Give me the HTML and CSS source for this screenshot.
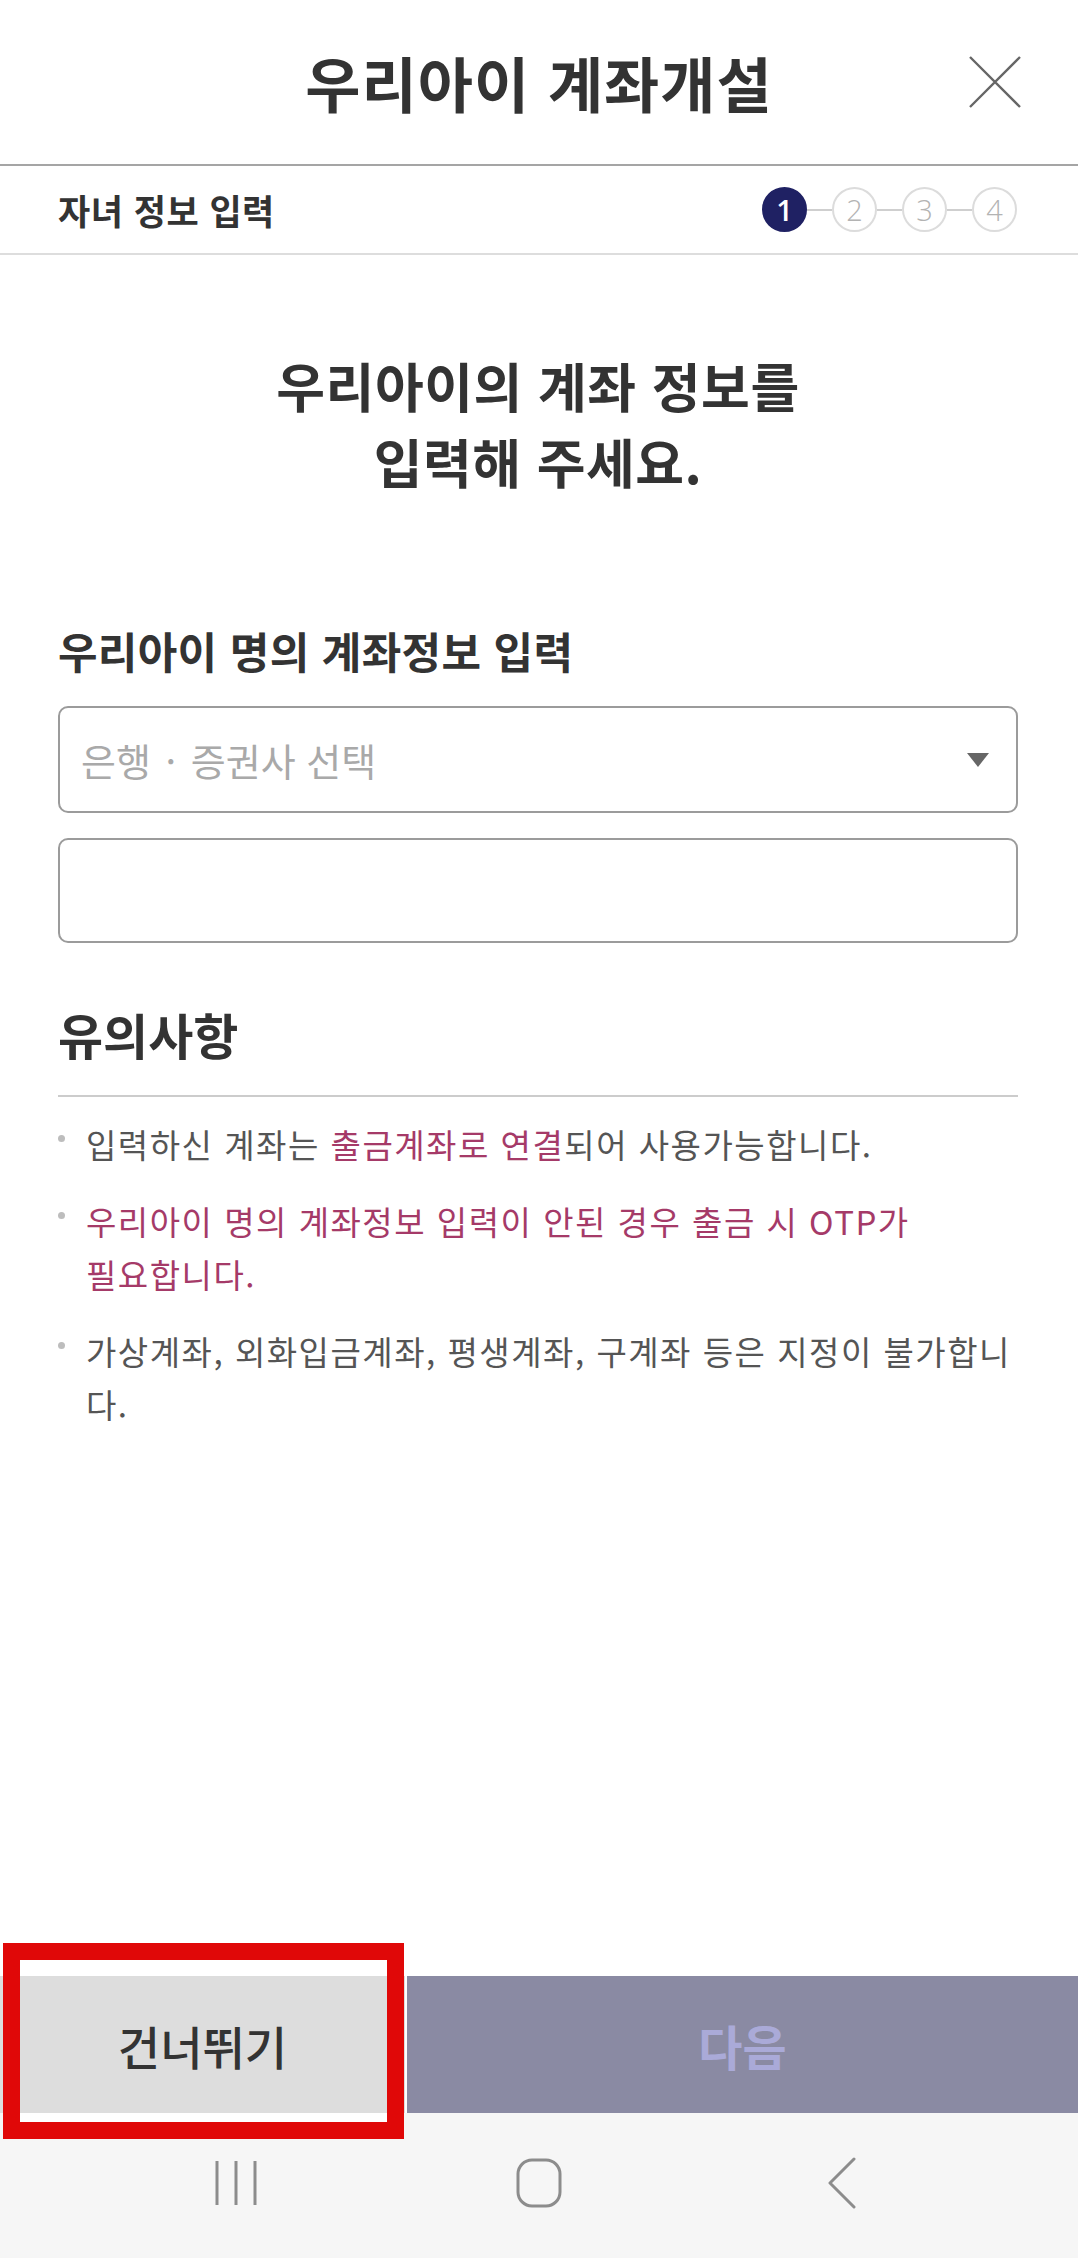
FILE: index.html
```html
<!DOCTYPE html>
<html lang="ko">
<head>
<meta charset="utf-8">
<title>우리아이 계좌개설</title>
<link rel="stylesheet" href="styles.css">
</head>
<body>
<div class="app">
  <header class="topbar">
    <div class="spacer"></div>
    <h1 class="title">우리아이 계좌개설</h1>
    <button class="close" aria-label="닫기">
      <svg width="52" height="52" viewBox="0 0 52 52"><path d="M1 1 L51 51 M51 1 L1 51" stroke="#666" stroke-width="2.4" fill="none"/></svg>
    </button>
  </header>

  <div class="steprow">
    <div class="steplabel">자녀 정보 입력</div>
    <div class="steps">
      <span class="step active">1</span><span class="link"></span>
      <span class="step">2</span><span class="link"></span>
      <span class="step">3</span><span class="link"></span>
      <span class="step">4</span>
    </div>
  </div>

  <main class="content">
    <h2 class="headline">우리아이의 계좌 정보를<br>입력해 주세요.</h2>

    <div class="fieldlabel">우리아이 명의 계좌정보 입력</div>
    <div class="select">
      <span class="placeholder">은행 <span class="mid">·</span> 증권사 선택</span>
      <span class="caret"></span>
    </div>
    <div class="input"></div>

    <h3 class="notice-title">유의사항</h3>
    <ul class="notice">
      <li><span class="dot"></span><p>입력하신 계좌는 <em>출금계좌로 연결</em>되어 사용가능합니다.</p></li>
      <li class="pink"><span class="dot"></span><p>우리아이 명의 계좌정보 입력이 안된 경우 출금 시 OTP가 <span class="nowrap">필요합니다.</span></p></li>
      <li><span class="dot"></span><p>가상계좌, 외화입금계좌, 평생계좌, 구계좌 등은 지정이 불가합니다.</p></li>
    </ul>
  </main>

  <div class="buttons">
    <button class="btn skip">건너뛰기</button>
    <button class="btn next">다음</button>
    <div class="highlight"></div>
  </div>

  <nav class="navbar">
    <div class="navitem">
      <svg width="44" height="48" viewBox="0 0 44 48"><path d="M3 2 V46 M22 2 V46 M41 2 V46" stroke="#8c8c8c" stroke-width="3" fill="none"/></svg>
    </div>
    <div class="navitem">
      <svg width="48" height="50" viewBox="0 0 48 50"><rect x="3" y="2" width="42" height="46" rx="14" ry="14" stroke="#8c8c8c" stroke-width="3" fill="none"/></svg>
    </div>
    <div class="navitem">
      <svg width="32" height="52" viewBox="0 0 32 52"><path d="M28 2 L4 26 L28 50" stroke="#8c8c8c" stroke-width="3" fill="none" stroke-linecap="round" stroke-linejoin="round"/></svg>
    </div>
  </nav>
</div>
</body>
</html>
```

FILE: styles.css
```css
* { box-sizing: border-box; }

html, body {
  margin: 0;
  padding: 0;
  background: #ffffff;
}

body {
  font-family: "Noto Sans CJK KR", "Noto Sans", sans-serif;
  color: #333333;
}

.app {
  width: 1078px;
  height: 2258px;
  display: flex;
  flex-direction: column;
  position: relative;
}

/* Header */
.topbar {
  height: 166px;
  border-bottom: 2px solid #a5a5a5;
  display: grid;
  grid-template-columns: 1fr auto 1fr;
  align-items: center;
}

.title {
  margin: 0;
  font-size: 60px;
  font-weight: 700;
  line-height: 1;
  color: #333333;
  letter-spacing: 1px;
}

.close {
  justify-self: end;
  margin-right: 57px;
  background: none;
  border: 0;
  padding: 0;
  width: 52px;
  height: 52px;
  display: flex;
}

/* Step row */
.steprow {
  height: 89px;
  border-bottom: 2px solid #dddddd;
  display: flex;
  align-items: center;
  justify-content: space-between;
  padding: 0 61px 0 58px;
}

.steplabel {
  font-size: 35px;
  font-weight: 700;
  color: #333333;
  line-height: 1;
  letter-spacing: 0.5px;
}

.steps {
  display: flex;
  align-items: center;
}

.step {
  width: 45px;
  height: 45px;
  border-radius: 50%;
  border: 2px solid #dcdcdc;
  display: flex;
  align-items: center;
  justify-content: center;
  font-family: "Open Sans", "Noto Sans", sans-serif;
  font-size: 29px;
  font-weight: 300;
  color: #b3b3b3;
  line-height: 1;
}

.step.active {
  background: #1f2163;
  border-color: #1f2163;
  color: #ffffff;
  font-weight: 600;
}

.link {
  width: 25px;
  height: 2px;
  background: #cfcfcf;
}

/* Content */
.content {
  padding: 0 60px 0 58px;
}

.headline {
  margin: 92px 0 0;
  text-align: center;
  font-size: 53px;
  font-weight: 700;
  line-height: 76px;
  color: #333333;
  letter-spacing: 0.5px;
}

.fieldlabel {
  margin-top: 125px;
  font-size: 43px;
  font-weight: 700;
  line-height: 52px;
  color: #333333;
  letter-spacing: 0.3px;
}

.select {
  margin-top: 30px;
  height: 107px;
  border: 2px solid #9b9b9b;
  border-radius: 10px;
  display: flex;
  align-items: center;
  justify-content: space-between;
  padding: 0 27px 0 21px;
}

.placeholder {
  font-size: 38px;
  color: #a9a9a9;
  line-height: 1;
}

.placeholder .mid {
  margin: 0 4px;
}

.caret {
  width: 0;
  height: 0;
  border-left: 11px solid transparent;
  border-right: 11px solid transparent;
  border-top: 14px solid #666666;
}

.input {
  margin-top: 25px;
  height: 105px;
  border: 2px solid #9b9b9b;
  border-radius: 10px;
}

.notice-title {
  margin: 62px 0 0;
  font-size: 49px;
  font-weight: 700;
  line-height: 58px;
  color: #333333;
  padding-bottom: 32px;
  border-bottom: 2px solid #cccccc;
}

.notice {
  list-style: none;
  margin: 21px 0 0;
  padding: 0;
}

.notice li {
  display: flex;
  align-items: flex-start;
  margin-bottom: 24px;
  color: #555555;
}

.notice li.pink {
  color: #a53a68;
}

.notice .dot {
  flex: none;
  width: 7px;
  height: 7px;
  border-radius: 50%;
  background: #bdbdbd;
  margin: 17px 21px 0 0;
}

.notice p {
  margin: 0;
  font-size: 33px;
  line-height: 53px;
  letter-spacing: 1.5px;
}

.notice .nowrap {
  white-space: nowrap;
}

.notice em {
  font-style: normal;
  color: #a53a68;
}

/* Bottom buttons */
.buttons {
  margin-top: auto;
  height: 137px;
  display: flex;
  gap: 2px;
  position: relative;
}

.btn {
  border: 0;
  margin: 0;
  padding: 0;
  font-family: "Noto Sans CJK KR", "Noto Sans", sans-serif;
}

.skip {
  width: 405px;
  background: #dddddd;
  color: #333333;
  font-size: 46px;
  font-weight: 500;
}

.next {
  flex: 1;
  background: #8a8aa3;
  color: #aaaad8;
  font-size: 48px;
  font-weight: 700;
}

.highlight {
  position: absolute;
  left: 3px;
  top: -33px;
  width: 401px;
  height: 196px;
  border: 17px solid #e00808;
  background: linear-gradient(to bottom, transparent 0, transparent calc(100% - 9px), #ffffff calc(100% - 9px));
  pointer-events: none;
}

/* Navigation bar */
.navbar {
  height: 145px;
  background: #f6f6f6;
  display: grid;
  grid-template-columns: repeat(3, 1fr);
  padding: 0 84px 6px;
  align-items: center;
}

.navitem {
  display: flex;
  justify-content: center;
  align-items: center;
}
```
